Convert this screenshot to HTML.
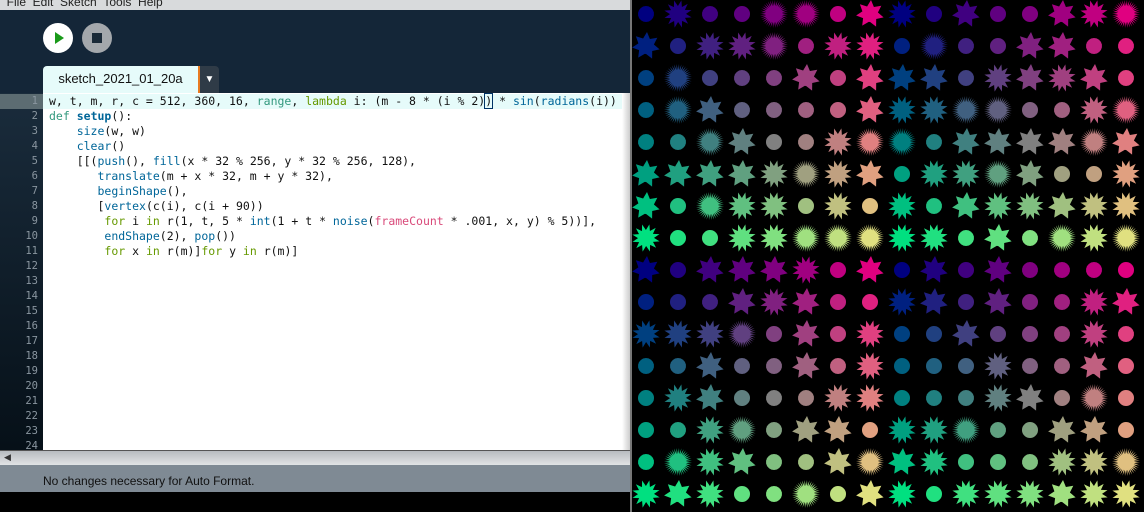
<!DOCTYPE html>
<html><head><style>
body{margin:0;width:1144px;height:512px;overflow:hidden;background:#000;position:relative;font-family:"Liberation Sans",sans-serif}
.a{position:absolute}
#code{font-family:"DejaVu Sans Mono","Liberation Mono",monospace;font-size:11.5px;line-height:15px;white-space:pre;color:#111}
.g{color:#33997e}.b{color:#006699}.bb{color:#006699;font-weight:bold}.l{color:#669900}.p{color:#d94a7a}
#nums{font-family:"DejaVu Sans Mono",monospace;font-size:10.5px;line-height:15px;color:#8a96a0;text-align:right;width:38px;white-space:pre}
</style></head><body>
<div class="a" style="left:0;top:0;width:630px;height:10px;background:#d8dadc;font-size:12px;line-height:4px;color:#222;overflow:hidden">&nbsp;&nbsp;File&nbsp;&nbsp;Edit&nbsp;&nbsp;Sketch&nbsp;&nbsp;Tools&nbsp;&nbsp;Help</div>
<div class="a" style="left:0;top:10px;width:630px;height:83px;background:#142638"></div>
<div class="a" style="left:43px;top:23px;width:30px;height:30px;border-radius:50%;background:#fff"></div>
<svg class="a" style="left:43px;top:23px" width="30" height="30"><path d="M12 9 L21 15 L12 21Z" fill="#1a9a1a"/></svg>
<div class="a" style="left:82px;top:23px;width:30px;height:30px;border-radius:50%;background:#a4a8ac"></div>
<div class="a" style="left:92px;top:33px;width:10px;height:10px;background:#1a2a38"></div>
<div class="a" style="left:43px;top:66px;width:155px;height:27px;background:#e6fbfa;border-radius:4px 0 0 0;font-size:13px;line-height:26px;text-align:center;color:#111">sketch_2021_01_20a</div>
<div class="a" style="left:198px;top:66px;width:2px;height:27px;background:#e87a20"></div>
<div class="a" style="left:200px;top:66px;width:19px;height:27px;background:#2f3b47;border-radius:0 4px 0 0;color:#fff;font-size:10px;line-height:27px;text-align:center">▼</div>
<div class="a" style="left:0;top:93px;width:43px;height:357px;background:linear-gradient(#1a2c3c,#061018)"></div>
<div class="a" style="left:0;top:94px;width:43px;height:15px;background:#5c6c72"></div>
<div class="a" style="left:43px;top:93px;width:587px;height:357px;background:#fff"></div>
<div class="a" style="left:43px;top:94px;width:580px;height:15px;background:#e6fbfa"></div>
<div class="a" style="left:622px;top:93px;width:8px;height:357px;background:linear-gradient(90deg,#fff,#ccc)"></div>
<div class="a" id="nums" style="left:0;top:94px">1
2
3
4
5
6
7
8
9
10
11
12
13
14
15
16
17
18
19
20
21
22
23
24</div>
<div class="a" id="code" style="left:49px;top:94px">w, t, m, r, c = 512, 360, 16, <span class="g">range</span>, <span class="l">lambda</span> i: (m - 8 * (i % 2)<span style="outline:1px solid #036">)</span> * <span class="b">sin</span>(<span class="b">radians</span>(i))
<span class="g">def</span> <span class="bb">setup</span>():
    <span class="b">size</span>(w, w)
    <span class="b">clear</span>()
    [[(<span class="b">push</span>(), <span class="b">fill</span>(x * 32 % 256, y * 32 % 256, 128),
       <span class="b">translate</span>(m + x * 32, m + y * 32),
       <span class="b">beginShape</span>(),
       [<span class="b">vertex</span>(c(i), c(i + 90))
        <span class="l">for</span> i <span class="l">in</span> r(1, t, 5 * <span class="b">int</span>(1 + t * <span class="b">noise</span>(<span class="p">frameCount</span> * .001, x, y) % 5))],
        <span class="b">endShape</span>(2), <span class="b">pop</span>())
        <span class="l">for</span> x <span class="l">in</span> r(m)]<span class="l">for</span> y <span class="l">in</span> r(m)]</div>
<div class="a" style="left:0;top:450px;width:630px;height:15px;background:linear-gradient(#b8bcc0,#e4e6e8);border-top:1px solid #555"></div>
<div class="a" style="left:4px;top:452px;font-size:9px;color:#333">◀</div>
<div class="a" style="left:0;top:465px;width:630px;height:27px;background:#7f8a94;font-size:12px;line-height:33px;color:#111"><span style="margin-left:43px">No changes necessary for Auto Format.</span></div>
<div class="a" style="left:630px;top:0;width:2px;height:512px;background:#777"></div>
<svg class="a" id="cv" style="left:630px;top:-2px" width="514" height="514"></svg>
<script>
var s=987654;function rnd(){s=(s*16807)%2147483647;return s/2147483647;}
var h='';
for(var x=0;x<16;x++)for(var y=0;y<16;y++){
 var q=rnd(),k;
 if(q<0.08)k=5;else if(q<0.33)k=10;else if(q<0.58)k=15;else if(q<0.78)k=20;else k=25;
 var pts=[];
 for(var i=1;i<360;i+=k){var r=16-8*(i%2);if(r==16)r=14;var a=i*Math.PI/180;pts.push((16+x*32+r*Math.sin(a)).toFixed(1)+','+(16+y*32+r*Math.cos(a)).toFixed(1));}
 h+='<polygon points="'+pts.join(' ')+'" fill="rgb('+(x*32%256)+','+(y*32%256)+',128)"/>';
}
document.getElementById('cv').innerHTML=h;
</script>
</body></html>
